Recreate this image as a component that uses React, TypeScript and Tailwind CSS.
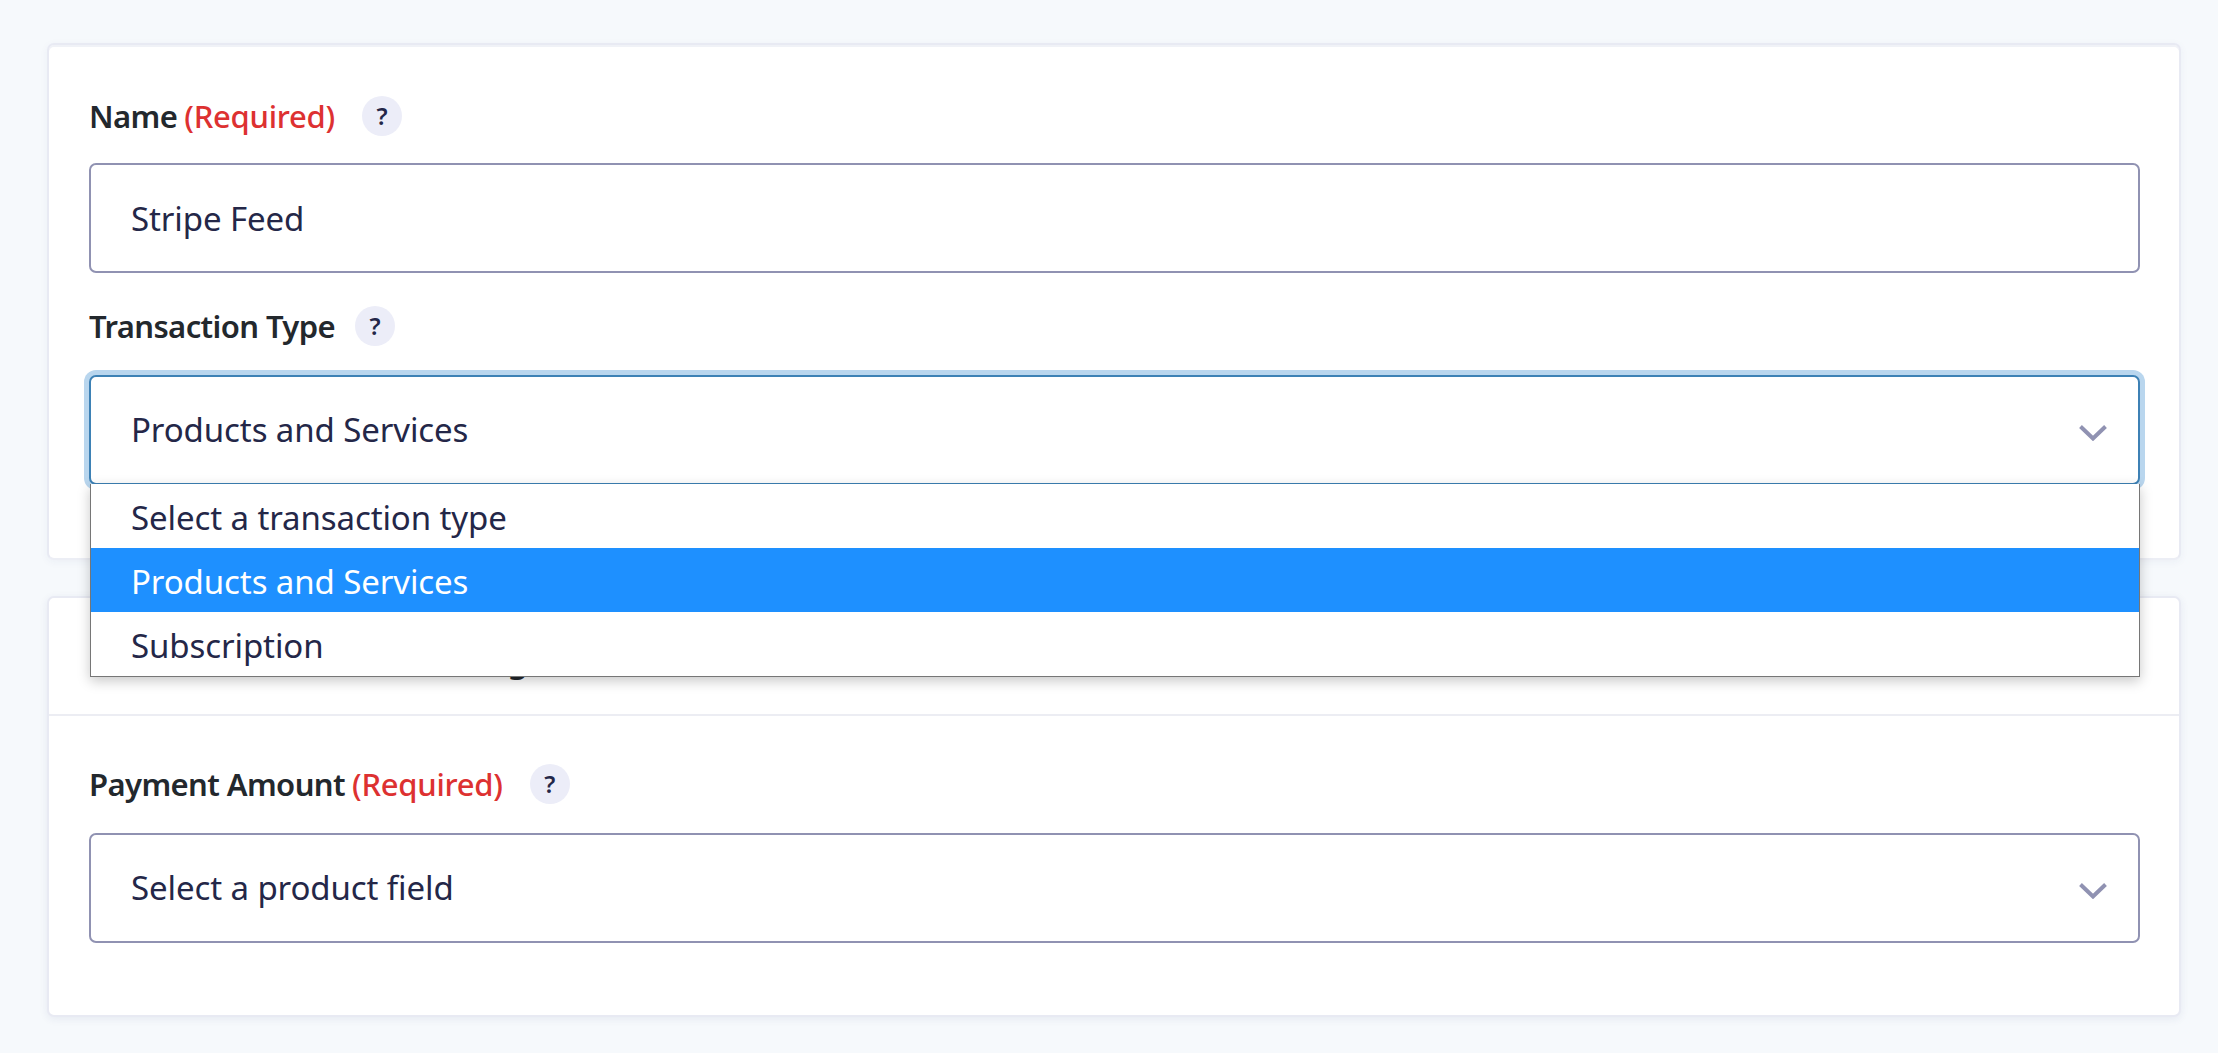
import type { ReactNode } from 'react';

const fontStack = "font-['Noto_Sans',sans-serif]";

function HelpBadge() {
  return (
    <span className="ml-5 flex h-10 w-10 shrink-0 items-center justify-center rounded-full bg-[#ecedf8] text-[24px] font-semibold text-[#242748]">
      ?
    </span>
  );
}

function FieldLabel({ children, required }: { children: ReactNode; required?: boolean }) {
  return (
    <div className="flex h-10 items-center">
      <span className="text-[31px] font-semibold tracking-[-0.6px] text-[#23282d]">{children}</span>
      {required && <span className="ml-[7px] pr-[7px] text-[31px] font-medium tracking-[-0.25px] text-[#dd3131]">(Required)</span>}
      <HelpBadge />
    </div>
  );
}

function Chevron() {
  return (
    <svg width="28" height="16" viewBox="0 0 28 16" fill="none" stroke="#9092b2" strokeWidth="4" className="mr-[31px] mt-[5px] shrink-0">
      <path d="M1.5 1.5L14 13.5L26.5 1.5" />
    </svg>
  );
}

function SelectBox({ label, focused }: { label: string; focused?: boolean }) {
  return (
    <div
      className={`flex h-[110px] items-center rounded-[7px] border-2 bg-white pl-10 text-[33px] tracking-[-0.1px] text-[#242748] ${
        focused ? 'border-[#3d81b5] shadow-[0_0_0_5px_#b9d6ee]' : 'border-[#9092b2]'
      }`}
    >
      <span className="flex-1">{label}</span>
      <Chevron />
    </div>
  );
}

export default function App() {
  const options = ['Select a transaction type', 'Products and Services', 'Subscription'];

  return (
    <div className={`flex h-[1053px] flex-col overflow-hidden bg-[#f6f9fc] pl-[47px] pr-[37px] pt-[43px] ${fontStack}`}>
      {/* Feed name + transaction type */}
      <section className="h-[517px] shrink-0 rounded-[7px] border-2 border-[#e8eaf3] border-b-[#eceef5] bg-white pl-10 pr-[39px] pt-[51px] shadow-[0_2px_8px_rgba(40,50,110,0.05),inset_0_2px_0_#f0f2f7]">
        <FieldLabel required>Name</FieldLabel>
        <input
          readOnly
          value="Stripe Feed"
          className="mt-[27px] block h-[110px] w-full rounded-[7px] border-2 border-[#9092b2] bg-white pl-10 text-[33px] tracking-[-0.1px] text-[#242748] outline-none"
        />
        <div className="mt-[33px]">
          <FieldLabel>Transaction Type</FieldLabel>
        </div>
        <div className="relative z-10 mt-[29px]">
          <SelectBox label="Products and Services" focused />
          {/* Native select popup, hangs over the next card */}
          <div className="absolute left-px right-0 top-[109px] border-x border-b border-[#767676] bg-white shadow-[0_4px_12px_rgba(0,0,0,0.22)]">
            {options.map((opt, i) => (
              <div
                key={opt}
                className={`flex h-16 items-center pl-10 pt-1 text-[33px] tracking-[-0.1px] ${
                  i === 1 ? 'bg-[#1e90ff] text-white' : 'text-[#242748]'
                }`}
              >
                {opt}
              </div>
            ))}
          </div>
        </div>
      </section>

      {/* Product settings */}
      <section className="mt-9 h-[421px] shrink-0 rounded-[7px] border-2 border-[#e8eaf3] bg-white shadow-[0_2px_8px_rgba(40,50,110,0.08)]">
        <div className="flex h-[118px] items-end border-b-2 border-[#ecedf3] pb-[38px] pl-10 pr-[39px]">
          <h3 className="text-[33px] font-semibold leading-none text-[#23282d]">Products &amp; Services Settings</h3>
        </div>
        <div className="pl-10 pr-[39px] pt-12">
          <FieldLabel required>Payment Amount</FieldLabel>
          <div className="mt-[29px]">
            <SelectBox label="Select a product field" />
          </div>
        </div>
      </section>
    </div>
  );
}
